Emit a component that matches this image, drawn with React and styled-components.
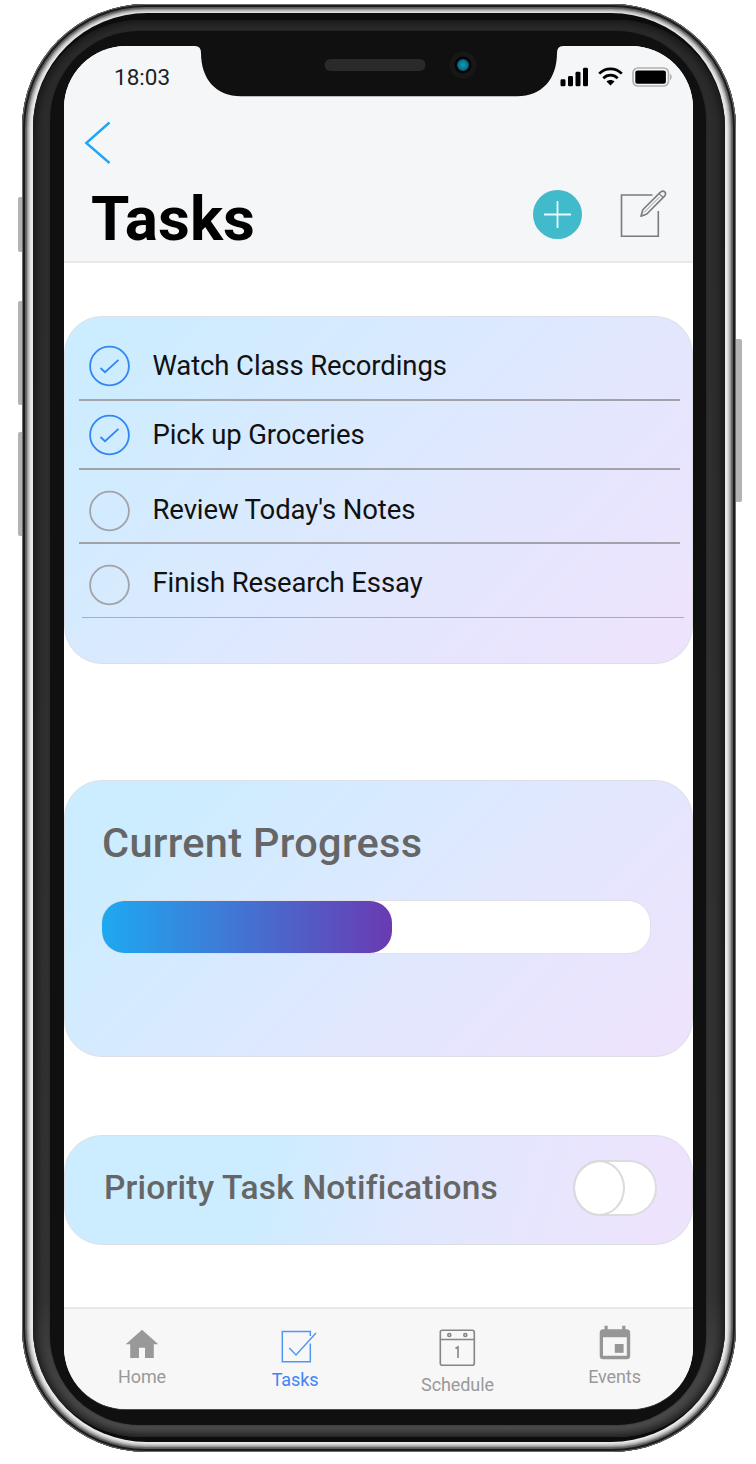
import React from "react";
import styled, { createGlobalStyle } from "styled-components";

const Global = createGlobalStyle`
  * { box-sizing: border-box; }
  body { margin: 0; background: #fff; font-family: Roboto, "Liberation Sans", sans-serif; }
  svg { display: block; flex: none; }
`;

const Page = styled.div`
  width: 756px;
  height: 1464px;
  padding: 4px 20px 0 22px;
  overflow: hidden;
`;

const Device = styled.div`
  position: relative;
  width: 714px;
  height: 1448px;
`;

const SideButton = styled.div`
  position: absolute;
  top: ${(p) => p.$top}px;
  height: ${(p) => p.$height}px;
  width: 6px;
  ${(p) => (p.$right ? "right: -6px; border-radius: 0 2px 2px 0;" : "left: -4px; border-radius: 2px 0 0 2px;")}
  background: #b3b3b3;
`;

const Metal = styled.div`
  position: relative;
  height: 100%;
  padding: 9px 11px 10px;
  border-radius: 124px;
  background: #e9e9e9;
  box-shadow:
    inset 0 0 0 1px #6d6d6d,
    inset 0 0 0 3px #1c1c1c,
    inset 0 0 0 4px #5c5c5c,
    inset 0 0 0 5px #6a6a6a,
    inset 0 0 0 6px #9a9a9a,
    inset 0 0 0 7px #b4b4b4,
    inset 0 0 0 8px #cdcdcd,
    inset 0 0 0 9px #dedede;
`;

const Glass = styled.div`
  height: 100%;
  padding: 7px 0 5px;
  border-radius: 114px;
  background: #0c0c0c;
`;

const Band = styled.div`
  height: 100%;
  padding: 11px 19px 12px 17px;
  border-radius: 108px;
  background: linear-gradient(#2c2c2c 0, #333 90%, #505050);
  box-shadow: inset 0 0 10px 3px #151515;
`;

const Bezel = styled.div`
  height: 100%;
  padding: 15px 13px 16px 14px;
  border-radius: 90px;
  background: #101010;
  box-shadow: 0 0 2px #1c1c1c;
`;

const Screen = styled.div`
  position: relative;
  height: 100%;
  display: flex;
  flex-direction: column;
  border-radius: 62px;
  overflow: hidden;
  background: #fff;
  box-shadow: 0 1px 0 #4a4a4a;
`;

const Notch = styled.svg`
  position: absolute;
  top: -1px;
  left: 131px;
`;

const Header = styled.header`
  flex: none;
  height: 217px;
  background: #f5f6f8;
  border-bottom: 2px solid #e9e9eb;
`;

const StatusBar = styled.div`
  display: flex;
  justify-content: space-between;
  align-items: center;
  height: 61px;
  padding: 0 20px 0 50px;
`;

const Time = styled.span`
  font-size: 22.5px;
  line-height: 26px;
  color: #222;
`;

const StatusIcons = styled.div`
  display: flex;
  align-items: center;
  gap: 9px;
`;

const BackButton = styled.button`
  display: block;
  margin: 14px 0 0 19px;
  padding: 0;
  border: 0;
  background: none;
`;

const TitleRow = styled.div`
  display: flex;
  align-items: center;
  justify-content: space-between;
  height: 80px;
  margin-top: 9px;
  padding: 0 26px 0 27px;
`;

const Title = styled.h1`
  margin: 10px 0 0;
  font-size: 62px;
  font-weight: 700;
  line-height: 72px;
  color: #000;
`;

const Actions = styled.div`
  display: flex;
  align-items: center;
  gap: 38px;
`;

const AddButton = styled.button`
  display: grid;
  place-items: center;
  width: 49px;
  height: 49px;
  padding: 0;
  border: 0;
  border-radius: 50%;
  background: #41bacb;
`;

const Content = styled.main`
  flex: 1;
  padding-top: 53px;
`;

const Card = styled.section`
  height: ${(p) => p.$height}px;
  margin-bottom: ${(p) => p.$gap}px;
  border: 1px solid #dcdfe6;
  border-radius: 38px;
  background: linear-gradient(${(p) => p.$angle}deg, #cbedff ${(p) => p.$start}%, #dfe8fe 55%, #eee3fd 94%);
`;

const TaskList = styled.ul`
  margin: 0;
  padding: 14px 0 0;
  list-style: none;
`;

const TaskRow = styled.li`
  display: flex;
  align-items: flex-end;
  gap: 23px;
  width: ${(p) => (p.$last ? 602 : 601)}px;
  height: ${(p) => p.$height}px;
  margin-left: ${(p) => (p.$last ? 17 : 14)}px;
  padding-left: ${(p) => (p.$last ? 6.5 : 9.5)}px;
  padding-bottom: ${(p) => p.$bottom}px;
  border-bottom: ${(p) => (p.$last ? "1px solid #abadb5" : "2px solid #a2a3a8")};
`;

const TaskName = styled.span`
  font-size: 27.5px;
  line-height: 32px;
  margin-bottom: ${(p) => p.$lift}px;
  letter-spacing: -0.11px;
  color: #111;
`;

const Heading = styled.h2`
  margin: 0;
  font-size: ${(p) => p.$size}px;
  line-height: 48px;
  font-weight: 500;
  letter-spacing: ${(p) => p.$spacing}px;
  color: #666;
`;

const ProgressBody = styled.div`
  padding: 38px 41px 0 36px;

  ${Heading} {
    padding-left: 1px;
  }
`;

const Track = styled.div`
  height: 54px;
  margin-top: 33px;
  border: 1px solid #dfe0e8;
  border-radius: 23px;
  background: #fff;
`;

const Fill = styled.div`
  height: 100%;
  border-radius: 22px;
  background: linear-gradient(90deg, #1ea9f1, #6a3ab2);
`;

const NoticeBody = styled.div`
  display: flex;
  align-items: center;
  justify-content: space-between;
  height: 100%;
  padding: 0 35px 4px 39px;
`;

const Switch = styled.div`
  width: 84px;
  height: 56px;
  border: 2px solid #dcdcdf;
  border-radius: 28px;
  background: #fff;
`;

const Knob = styled.div`
  width: 52px;
  height: 56px;
  margin: -2px;
  border: 2px solid #dadadd;
  border-radius: 50%;
`;

const TabBar = styled.nav`
  flex: none;
  display: flex;
  height: 102px;
  border-top: 2px solid #e8e8e9;
  background: #f7f7f8;
`;

const Tab = styled.a`
  display: flex;
  flex-direction: column;
  align-items: center;
  width: ${(p) => p.$width}px;
  padding-top: ${(p) => p.$top}px;
  color: ${(p) => (p.$active ? "#4285f4" : "#999")};

  svg {
    margin-left: ${(p) => p.$nudge || 0}px;
  }
`;

const TabLabel = styled.span`
  margin-top: ${(p) => p.$gap}px;
  font-size: 18px;
  line-height: 22px;
  letter-spacing: -0.1px;
`;

const SignalIcon = () => (
  <svg width="29" height="20" viewBox="0 0 29 20" fill="#000">
    <rect x="0.5" y="12.3" width="5" height="7" rx="1.4" />
    <rect x="8" y="9" width="5" height="10.3" rx="1.4" />
    <rect x="15.5" y="4.8" width="5" height="14.5" rx="1.4" />
    <rect x="23" y="0.8" width="5" height="18.5" rx="1.4" />
  </svg>
);

const WifiIcon = () => (
  <svg width="25" height="20" viewBox="0 0 25 20" fill="none" stroke="#000" strokeWidth="2.7">
    <path d="M1.2 6.6C7.6 0.3 17.4 0.3 23.8 6.6" />
    <path d="M5.3 11.2c4.1-4 10.3-4 14.4 0" />
    <path d="M12.5 18.6 8.5 14.6c2.2-2 5.8-2 8 0z" fill="#000" stroke="none" />
  </svg>
);

const BatteryIcon = () => (
  <svg width="41" height="20" viewBox="0 0 41 20">
    <rect x="1" y="1" width="35.5" height="18" rx="5" fill="#f7f8f9" stroke="#b0b0b0" strokeWidth="1.7" />
    <rect x="3.3" y="3.4" width="30.600" height="13.4" rx="2" fill="#000" />
    <path d="M38 6.8c2.2.9 2.2 5.500 0 6.400z" fill="#b0b0b0" />
  </svg>
);

const ComposeIcon = () => (
  <svg width="47" height="48" viewBox="0 0 47 48" fill="none" stroke="#7b7b7b" strokeWidth="1.6">
    <path d="M32.500 5H1.500V46.300H38.300V21" />
    <path d="M21 26.200 22.800 19.800 40.200 2.400C41.700.9 43.300.6 44.700 1.900 46 3.200 45.800 4.900 44.300 6.400L26.800 24z" strokeLinejoin="round" />
    <path d="M39.300 3.800 43 7.500" strokeWidth="1.200" />
    <path d="M24 22.500 39.500 7" strokeWidth="0.800" />
  </svg>
);

const CheckCircle = ({ done }) => (
  <svg width="41" height="42" viewBox="0 0 41 42" fill="none" stroke={done ? "#3286f3" : "#a1a3a8"} strokeWidth="1.8">
    <circle cx="20.500" cy="21" r="19.400" />
    {done && <path d="M11.500 23 16 27.200 29.500 14.800" />}
  </svg>
);

const HomeIcon = () => (
  <svg width="34" height="30" viewBox="0 0 34 30" fill="#999">
    <path d="M17 .8 33.300 15.200H28.800V29H20V18.800H14V29H5.200V15.200H.7z" />
  </svg>
);

const TasksIcon = () => (
  <svg width="36" height="34" viewBox="0 0 36 34" fill="none" stroke="#4f97f5" strokeWidth="1.5">
    <path d="M29.300 6V1.500H1.300V31.700H29.300V13.500" />
    <path d="M8.300 18 15 25 35 3" />
  </svg>
);

const ScheduleIcon = () => (
  <svg width="37" height="38" viewBox="0 0 37 38" fill="none" stroke="#858585" strokeWidth="1.600">
    <rect x="1.300" y="1.300" width="34" height="35" rx="2" />
    <path d="M1.300 10.500H35.300" />
    <circle cx="10.300" cy="6" r="1.500" />
    <circle cx="26.300" cy="6" r="1.500" />
    <path d="M16.500 19.500 19 18V29" />
  </svg>
);

const EventsIcon = () => (
  <svg width="32" height="35" viewBox="0 0 32 35" fill="#969696">
    <path fillRule="evenodd" d="M5.500.7h3.200v3.600h14.500V.7h3.200v3.600h1.300a3.500 3.500 0 0 1 3.500 3.500v23a3.500 3.500 0 0 1-3.500 3.500H4.200a3.500 3.500 0 0 1-3.500-3.500v-23a3.500 3.500 0 0 1 3.500-3.500h1.300zM4 12.300V30.800H27.800V12.300z" />
    <rect x="15.800" y="19" width="8.800" height="8.800" />
  </svg>
);

const tasks = [
  { name: "Watch Class Recordings", done: true, height: 70, bottom: 12, lift: 5 },
  { name: "Pick up Groceries", done: true, height: 69, bottom: 12, lift: 5 },
  { name: "Review Today's Notes", done: false, height: 74, bottom: 10, lift: 6 },
  { name: "Finish Research Essay", done: false, height: 74, bottom: 11, lift: 7 },
];

const progress = 53;

export default function App() {
  return (
    <Page>
      <Global />
      <Device>
        <SideButton $top={193} $height={55} />
        <SideButton $top={297} $height={104} />
        <SideButton $top={428} $height={104} />
        <SideButton $right $top={335} $height={163} />
        <Metal>
          <Glass>
            <Band>
              <Bezel>
                <Screen>
                  <Header>
                    <StatusBar>
                      <Time>18:03</Time>
                      <StatusIcons>
                        <SignalIcon />
                        <WifiIcon />
                        <BatteryIcon />
                      </StatusIcons>
                    </StatusBar>
                    <BackButton aria-label="Back">
                      <svg width="30" height="44" viewBox="0 0 30 44" fill="none" stroke="#1da7f4" strokeWidth="2.400">
                        <path d="M26.500 1.500 3.300 22 26.500 42" />
                      </svg>
                    </BackButton>
                    <TitleRow>
                      <Title>Tasks</Title>
                      <Actions>
                        <AddButton aria-label="Add task">
                          <svg width="29" height="29" viewBox="0 0 29 29" stroke="#e6fbfd" strokeWidth="1.800">
                            <path d="M14.500 1V28M1 14.500H28" />
                          </svg>
                        </AddButton>
                        <ComposeIcon />
                      </Actions>
                    </TitleRow>
                  </Header>

                  <Content>
                    <Card $height={348} $gap={116} $angle={135} $start={3}>
                      <TaskList>
                        {tasks.map((t, i) => (
                          <TaskRow key={t.name} $height={t.height} $bottom={t.bottom} $last={i === tasks.length - 1}>
                            <CheckCircle done={t.done} />
                            <TaskName $lift={t.lift}>{t.name}</TaskName>
                          </TaskRow>
                        ))}
                      </TaskList>
                    </Card>

                    <Card $height={277} $gap={78} $angle={135} $start={10}>
                      <ProgressBody>
                        <Heading $size={41.5} $spacing={0.3}>Current Progress</Heading>
                        <Track>
                          <Fill style={{ width: `${progress}%` }} />
                        </Track>
                      </ProgressBody>
                    </Card>

                    <Card $height={110} $gap={0} $angle={105} $start={30}>
                      <NoticeBody>
                        <Heading $size={33.5} $spacing={0.2}>Priority Task Notifications</Heading>
                        <Switch>
                          <Knob />
                        </Switch>
                      </NoticeBody>
                    </Card>
                  </Content>

                  <TabBar>
                    <Tab $width={156} $top={20}>
                      <HomeIcon />
                      <TabLabel $gap={7}>Home</TabLabel>
                    </Tab>
                    <Tab $width={150} $top={21} $nudge={8} $active>
                      <TasksIcon />
                      <TabLabel $gap={5}>Tasks</TabLabel>
                    </Tab>
                    <Tab $width={175} $top={20}>
                      <ScheduleIcon />
                      <TabLabel $gap={7}>Schedule</TabLabel>
                    </Tab>
                    <Tab $width={139} $top={16}>
                      <EventsIcon />
                      <TabLabel $gap={6}>Events</TabLabel>
                    </Tab>
                  </TabBar>

                  <Notch width="368" height="52" viewBox="0 0 368 52">
                    <defs>
                      <radialGradient id="lens">
                        <stop offset="0" stopColor="#139baa" />
                        <stop offset="0.600" stopColor="#087e99" />
                        <stop offset="1" stopColor="#07536f" />
                      </radialGradient>
                    </defs>
                    <path d="M0 0H368V1Q362 1 362 8C362 34 347 51.300 322 51.300H46C21 51.300 6 34 6 8Q6 1 0 1z" fill="#101010" />
                    <rect x="129.500" y="14" width="101" height="12" rx="6" fill="#2a2a2a" />
                    <circle cx="268" cy="20" r="13.500" fill="#171717" />
                    <circle cx="268" cy="20" r="8.500" fill="#030507" />
                    <circle cx="268" cy="20" r="6" fill="url(#lens)" />
                  </Notch>
                </Screen>
              </Bezel>
            </Band>
          </Glass>
        </Metal>
      </Device>
    </Page>
  );
}
